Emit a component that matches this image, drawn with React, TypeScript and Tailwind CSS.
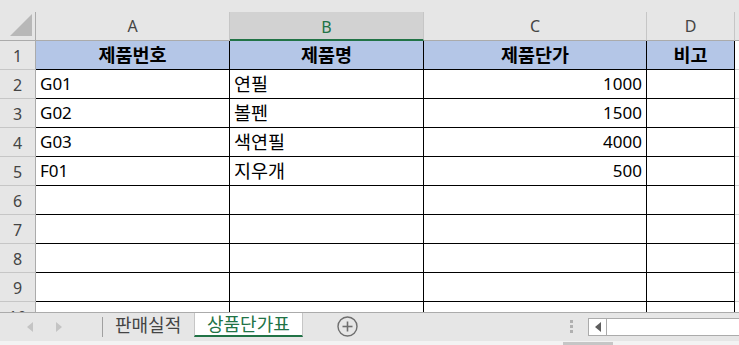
import React from "react";

const headers = ["제품번호", "제품명", "제품단가", "비고"];
const rows: string[][] = [
  ["G01", "연필", "1000", ""],
  ["G02", "볼펜", "1500", ""],
  ["G03", "색연필", "4000", ""],
  ["F01", "지우개", "500", ""],
  ["", "", "", ""],
  ["", "", "", ""],
  ["", "", "", ""],
  ["", "", "", ""],
];
const letters = ["A", "B", "C", "D"];

const font = "font-['Noto_Sans','Noto_Sans_CJK_KR',sans-serif]";
const hangul = /[가-힣]/;

function RowHead({ n, short }: { n: number; short?: boolean }) {
  return (
    <div
      className={`${short ? "h-[10px]" : "h-[29px]"} overflow-hidden bg-[#e6e6e6] border-r border-r-[#ababab] ${short ? "" : "border-b border-b-[#c6c6c6]"}`}
    >
      <div className="h-[29px] flex items-center justify-center text-[16px] text-[#444]">{n}</div>
    </div>
  );
}

function Cell({ text, align, bold, fill, short }: { text: string; align: "l" | "c" | "r"; bold?: boolean; fill?: boolean; short?: boolean }) {
  const just = align === "l" ? "justify-start" : align === "c" ? "justify-center" : "justify-end";
  const size = hangul.test(text) ? "text-[18.5px]" : "text-[17px]";
  return (
    <div
      className={`${short ? "h-[10px]" : "h-[29px] border-b"} overflow-hidden border-r border-black ${fill ? "bg-[#b4c6e7]" : "bg-white"}`}
    >
      <div className={`h-[28px] flex items-center ${just} px-[4px] ${size} text-black ${bold ? "font-bold" : ""}`}>
        {text}
      </div>
    </div>
  );
}

export default function App() {
  return (
    <div className={`w-[739px] h-[345px] overflow-hidden bg-white flex flex-col ${font}`}>
      {/* strip above the column letters */}
      <div className="h-[12px] bg-[#e6e6e6] shrink-0" />

      {/* grid of headers and cells */}
      <div className="grid grid-cols-[36px_194px_194px_223px_88px_4px] shrink-0">
        {/* corner */}
        <div className="h-[29px] bg-[#e6e6e6] border-r border-b border-r-[#ababab] border-b-[#ababab] flex items-end justify-end pr-[3px] pb-[4px]">
          <svg width="22" height="22" viewBox="0 0 22 22">
            <polygon points="22,0 22,22 0,22" fill="#b8b8b8" />
          </svg>
        </div>
        {letters.map((l) => {
          const sel = l === "B";
          return (
            <div
              key={l}
              className={`h-[29px] flex items-center justify-center text-[16px] border-r ${
                sel
                  ? "bg-[#d2d2d2] text-[#217346] border-b-2 border-b-[#217346] border-r-[#c6c6c6] pt-[2px]"
                  : "bg-[#e6e6e6] text-[#444] border-b border-b-[#ababab] border-r-[#c6c6c6]"
              }`}
            >
              {l}
            </div>
          );
        })}
        <div className="h-[29px] bg-[#e6e6e6] border-b border-b-[#ababab]" />

        {/* title row */}
        <RowHead n={1} />
        {headers.map((h) => (
          <Cell key={h} text={h} align="c" bold fill />
        ))}
        <div className="h-[29px] border-b border-b-[#d4d4d4]" />

        {rows.map((r, i) => (
          <React.Fragment key={i}>
            <RowHead n={i + 2} />
            <Cell text={r[0]} align="l" />
            <Cell text={r[1]} align="l" />
            <Cell text={r[2]} align="r" />
            <Cell text={r[3]} align="l" />
            <div className="h-[29px] border-b border-b-[#d4d4d4]" />
          </React.Fragment>
        ))}

        {/* partially shown row 10 */}
        <RowHead n={10} short />
        <Cell text="" align="l" short />
        <Cell text="" align="l" short />
        <Cell text="" align="l" short />
        <Cell text="" align="l" short />
        <div className="h-[10px]" />
      </div>

      {/* sheet tab bar */}
      <div className="h-[29px] shrink-0 bg-[#e6e6e6] border-t border-t-[#ababab] flex items-start">
        <div className="w-[102px] h-[28px] flex items-center pl-[27px] gap-[23px]">
          <svg width="6" height="10" viewBox="0 0 6 10">
            <polygon points="6,0 6,10 0,5" fill="#c4c4c4" />
          </svg>
          <svg width="6" height="10" viewBox="0 0 6 10">
            <polygon points="0,0 0,10 6,5" fill="#c4c4c4" />
          </svg>
        </div>
        <div className="w-px h-[20px] mt-[4px] bg-[#a0a0a0]" />
        <div className="h-[24px] flex items-center pl-[12px] w-[91px] text-[18px] text-[#444] whitespace-nowrap">
          판매실적
        </div>
        <div className="h-[24px] w-[109px] bg-white border-l border-r border-[#c6c6c6] border-b-2 border-b-[#217346] flex items-center pl-[12px] text-[18px] text-[#217346] whitespace-nowrap">
          상품단가표
        </div>
        <div className="ml-[34px] mt-[3px] w-[21px] h-[21px]">
          <svg width="21" height="21" viewBox="0 0 21 21">
            <circle cx="10.5" cy="10.5" r="9.5" fill="none" stroke="#6e6e6e" strokeWidth="1.4" />
            <line x1="10.5" y1="5.5" x2="10.5" y2="15.5" stroke="#6e6e6e" strokeWidth="1.6" />
            <line x1="5.5" y1="10.5" x2="15.5" y2="10.5" stroke="#6e6e6e" strokeWidth="1.6" />
          </svg>
        </div>
        <div className="ml-[212px] mt-[7px] flex flex-col gap-[2px]">
          <div className="w-[3px] h-[3px] bg-[#b0b0b0]" />
          <div className="w-[3px] h-[3px] bg-[#b0b0b0]" />
          <div className="w-[3px] h-[3px] bg-[#b0b0b0]" />
        </div>
        <div className="ml-[15px] mt-[5px] h-[18px] flex-1 border border-r-0 border-[#ababab] bg-white flex">
          <div className="w-[18px] h-full border-r border-r-[#ababab] flex items-center justify-center">
            <svg width="6" height="10" viewBox="0 0 6 10">
              <polygon points="6,0 6,10 0,5" fill="#5e5e5e" />
            </svg>
          </div>
          <div className="flex-1" />
        </div>
      </div>

      {/* strip under the tabs */}
      <div className="flex-1 bg-[#f3f3f3] flex items-end">
        <div className="ml-[563px] w-[50px] h-[3px] bg-[#c6c6c6]" />
      </div>
    </div>
  );
}
